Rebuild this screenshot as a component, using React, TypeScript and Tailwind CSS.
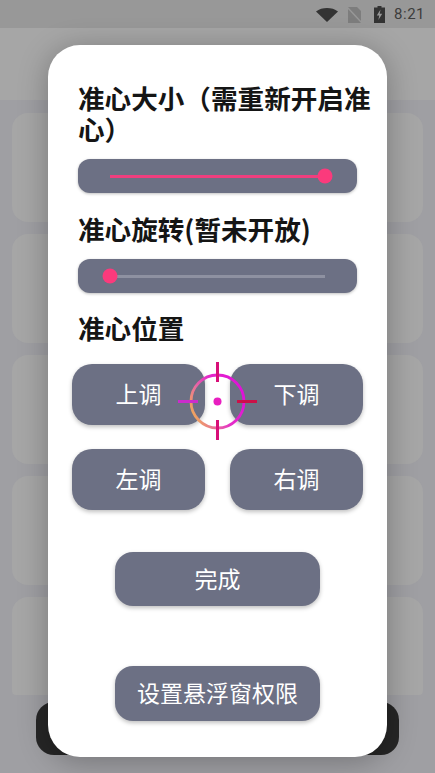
import { ReactNode } from 'react';

const font = { fontFamily: '"Noto Sans CJK SC", "Noto Sans", sans-serif' };

function ActionButton({ children, className }: { children: ReactNode; className: string }) {
  return (
    <button className={`flex items-center justify-center bg-[#6c7084] pb-[2px] text-[23px] text-white shadow-[0_2px_4px_rgba(0,0,0,0.25)] ${className}`}>
      {children}
    </button>
  );
}

function Slider({ percent, className }: { percent: number; className: string }) {
  return (
    <div className={`flex h-[34px] w-[279px] items-center rounded-[12px] bg-[#6c7084] px-[32px] shadow-[0_1px_3px_rgba(0,0,0,0.25)] ${className}`}>
      <div className="relative h-[3px] w-full bg-[#8e91a1]">
        <div className="h-full bg-[#f03e7e]" style={{ width: `${percent}%` }} />
        <div
          className="absolute top-1/2 h-[15px] w-[15px] -translate-x-1/2 -translate-y-1/2 rounded-full bg-[#fb3a7c]"
          style={{ left: `${percent}%` }}
        />
      </div>
    </div>
  );
}

function Crosshair() {
  return (
    <svg className="absolute left-[176px] top-[361px] h-[80px] w-[84px]" viewBox="0 0 84 80" fill="none">
      <defs>
        <linearGradient id="ring" x1="0" y1="0.8" x2="1" y2="0.3">
          <stop offset="0" stopColor="#f0b050" />
          <stop offset="0.3" stopColor="#e86ca0" />
          <stop offset="0.55" stopColor="#e42cc8" />
          <stop offset="1" stopColor="#e010d8" />
        </linearGradient>
      </defs>
      <circle cx="41.5" cy="40.500" r="26.500" stroke="url(#ring)" strokeWidth="2.8" />
      <circle cx="41.5" cy="40.500" r="4" fill="#e81fc0" />
      <path d="M41.5 1V21M41.5 59V79" stroke="#d80f78" strokeWidth="3" />
      <path d="M2 40.500H22" stroke="#cc2ccc" strokeWidth="3" />
      <path d="M61 40.500H81" stroke="#cc1048" strokeWidth="3" />
    </svg>
  );
}

export default function App() {
  const rows = [0, 1, 2, 3, 4];

  return (
    <div className="relative h-[773px] w-[435px] overflow-hidden bg-[#9f9fa3]" style={font}>
      {/* Status bar */}
      <div className="flex h-[28px] items-center justify-end bg-[#989898] pr-[10px] pt-[1px] text-[#3d3d3d]">
        <svg className="mr-[9px] h-[14px] w-[22px]" viewBox="0 0 22 14">
          <path d="M0 3.5C3 1 7 0 11 0s8 1 11 3.5L11 14z" fill="#333333" />
        </svg>
        <svg className="mr-[12px] h-[16px] w-[15px]" viewBox="0 0 15 16">
          <path d="M1 0h9l4 4v12H1z" fill="#7d7d7d" />
          <path d="M0 0l15 16" stroke="#989898" strokeWidth="1.5" />
        </svg>
        <svg className="mr-[9px] h-[17px] w-[11px]" viewBox="0 0 11 17">
          <path d="M3.5 0h4v1.5H11V17H0V1.5h3.5z" fill="#333333" />
          <path d="M6.5 3.5L2.8 9.5h2.4L4.400 14l3.800-6.300H5.700z" fill="#989898" />
        </svg>
        <span className="text-[15px] leading-none tracking-[0.5px]" style={{ fontFamily: 'Roboto, sans-serif' }}>8:21</span>
      </div>

      {/* Page behind the dialog */}
      <div className="h-[72px] bg-[#a6a6a6]" />
      <div className="mx-[12px] mt-[13px] flex h-[582px] flex-col gap-[12px] overflow-hidden rounded-b-[4px]">
        {rows.map((row) => (
          <div key={row} className="grid h-[109px] shrink-0 grid-cols-2 gap-[12px]">
            <div className="rounded-[16px] bg-[#a6a6a6]" />
            <div className="rounded-[16px] bg-[#a6a6a6]" />
          </div>
        ))}
      </div>
      <div className="absolute left-[36px] top-[702px] h-[53px] w-[363px] rounded-[18px] bg-[#262626]" />

      {/* Dialog */}
      <div className="absolute left-[48px] top-[45px] flex h-[712px] w-[339px] flex-col rounded-[32px] bg-white pl-[30px] pt-[37px] shadow-[0_4px_30px_rgba(0,0,0,0.28)]">
        <h2 className="w-[300px] text-[26.6px] font-bold leading-[31px] text-[#151515]">准心大小（需重新开启准心）</h2>
        <Slider percent={100} className="mt-[15px]" />
        <h2 className="mt-[20px] text-[26.6px] font-bold leading-[31px] text-[#151515]">准心旋转(暂未开放)</h2>
        <Slider percent={0} className="mt-[15px]" />
        <h2 className="mt-[19px] text-[26.6px] font-bold leading-[31px] text-[#151515]">准心位置</h2>
        <div className="-ml-[6px] mt-[21px] grid w-[290px] grid-cols-[133px_133px] gap-x-[25px] gap-y-[24px]">
          <ActionButton className="h-[61px] rounded-[20px]">上调</ActionButton>
          <ActionButton className="h-[61px] rounded-[20px]">下调</ActionButton>
          <ActionButton className="h-[61px] rounded-[20px]">左调</ActionButton>
          <ActionButton className="h-[61px] rounded-[20px]">右调</ActionButton>
        </div>
        <ActionButton className="ml-[37px] mt-[42px] h-[54px] w-[205px] rounded-[18px]">完成</ActionButton>
        <ActionButton className="ml-[37px] mt-[60px] h-[55px] w-[205px] rounded-[18px]">设置悬浮窗权限</ActionButton>
      </div>
      <Crosshair />
    </div>
  );
}
